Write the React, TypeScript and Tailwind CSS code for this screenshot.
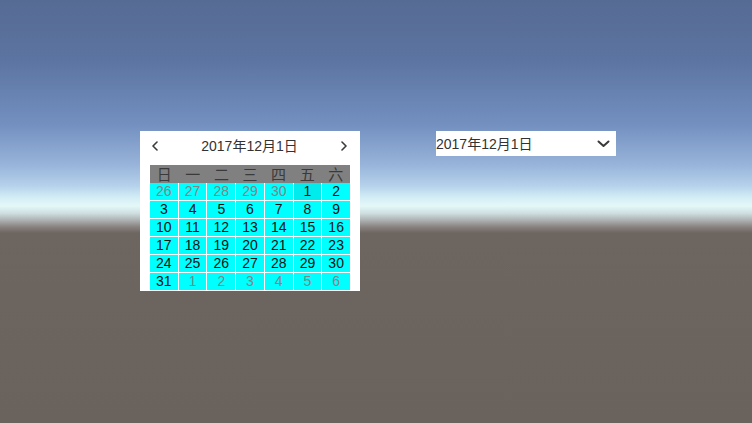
import React from "react";

const FONT = { fontFamily: '"Liberation Sans", "Noto Sans CJK SC", sans-serif' };

const labels = ["日", "一", "二", "三", "四", "五", "六"];

type Day = { n: number; cur: boolean; sel?: boolean };

const days: Day[] = [
  ...[26, 27, 28, 29, 30].map((n) => ({ n, cur: false })),
  ...Array.from({ length: 31 }, (_, i) => ({ n: i + 1, cur: true, sel: i === 0 })),
  ...[1, 2, 3, 4, 5, 6].map((n) => ({ n, cur: false })),
];

function Chevron({ dir }: { dir: "left" | "right" }) {
  return (
    <svg width="6" height="10" viewBox="0 0 6 10" className="shrink-0">
      <path
        d={dir === "left" ? "M5 1 L1 5 L5 9" : "M1 1 L5 5 L1 9"}
        fill="none"
        stroke="#3a3a3a"
        strokeWidth="1.6"
        strokeLinecap="round"
        strokeLinejoin="round"
      />
    </svg>
  );
}

export default function App() {
  return (
    <div
      className="w-[752px] h-[423px] overflow-hidden flex items-start pt-[131px] pl-[140px] gap-[76px] bg-[linear-gradient(to_bottom,#566b94_0px,#5c74a1_60px,#7390c0_125px,#98b4da_165px,#b4d0ea_185px,#d4eef6_198px,#e4f8f8_206px,#d0e0e2_213px,#a8acac_221px,#88827f_227px,#6d6560_233px,#6a625d_100%)]"
      style={FONT}
    >
      <div className="w-[220px] h-[160px] bg-white flex flex-col">
        <div className="h-[30px] flex items-center pl-[12px] pr-[13px]">
          <Chevron dir="left" />
          <div className="flex-1 text-center text-[14px] leading-[20px] text-[#323232]">2017年12月1日</div>
          <Chevron dir="right" />
        </div>
        <div className="mt-[4px] ml-[10px] w-[200px]">
          <div className="h-[18px] bg-[#808080] grid grid-cols-7">
            {labels.map((l) => (
              <div key={l} className="flex items-center justify-center pt-[1px] text-[15px] leading-[18px] text-[#3a3a3a]">
                {l}
              </div>
            ))}
          </div>
          <div className="grid grid-cols-7 gap-px bg-white">
            {days.map((d, i) => (
              <div
                key={i}
                className={
                  "h-[17px] flex items-center justify-center text-[14px] leading-[17px] " +
                  (d.sel ? "bg-[#00ebeb] " : "bg-[#00ffff] ") +
                  (d.cur ? "text-[#111111]" : "text-[#848484]")
                }
              >
                {d.n}
              </div>
            ))}
          </div>
        </div>
      </div>

      <div className="w-[180px] h-[25px] bg-white flex items-center justify-between pr-[6px]">
        <span className="text-[14px] leading-[20px] text-[#323232]">2017年12月1日</span>
        <svg width="13" height="8" viewBox="0 0 13 8">
          <path d="M1.5 1.5 L6.5 6 L11.5 1.5" fill="none" stroke="#3a3a3a" strokeWidth="2" strokeLinecap="round" strokeLinejoin="round" />
        </svg>
      </div>
    </div>
  );
}
